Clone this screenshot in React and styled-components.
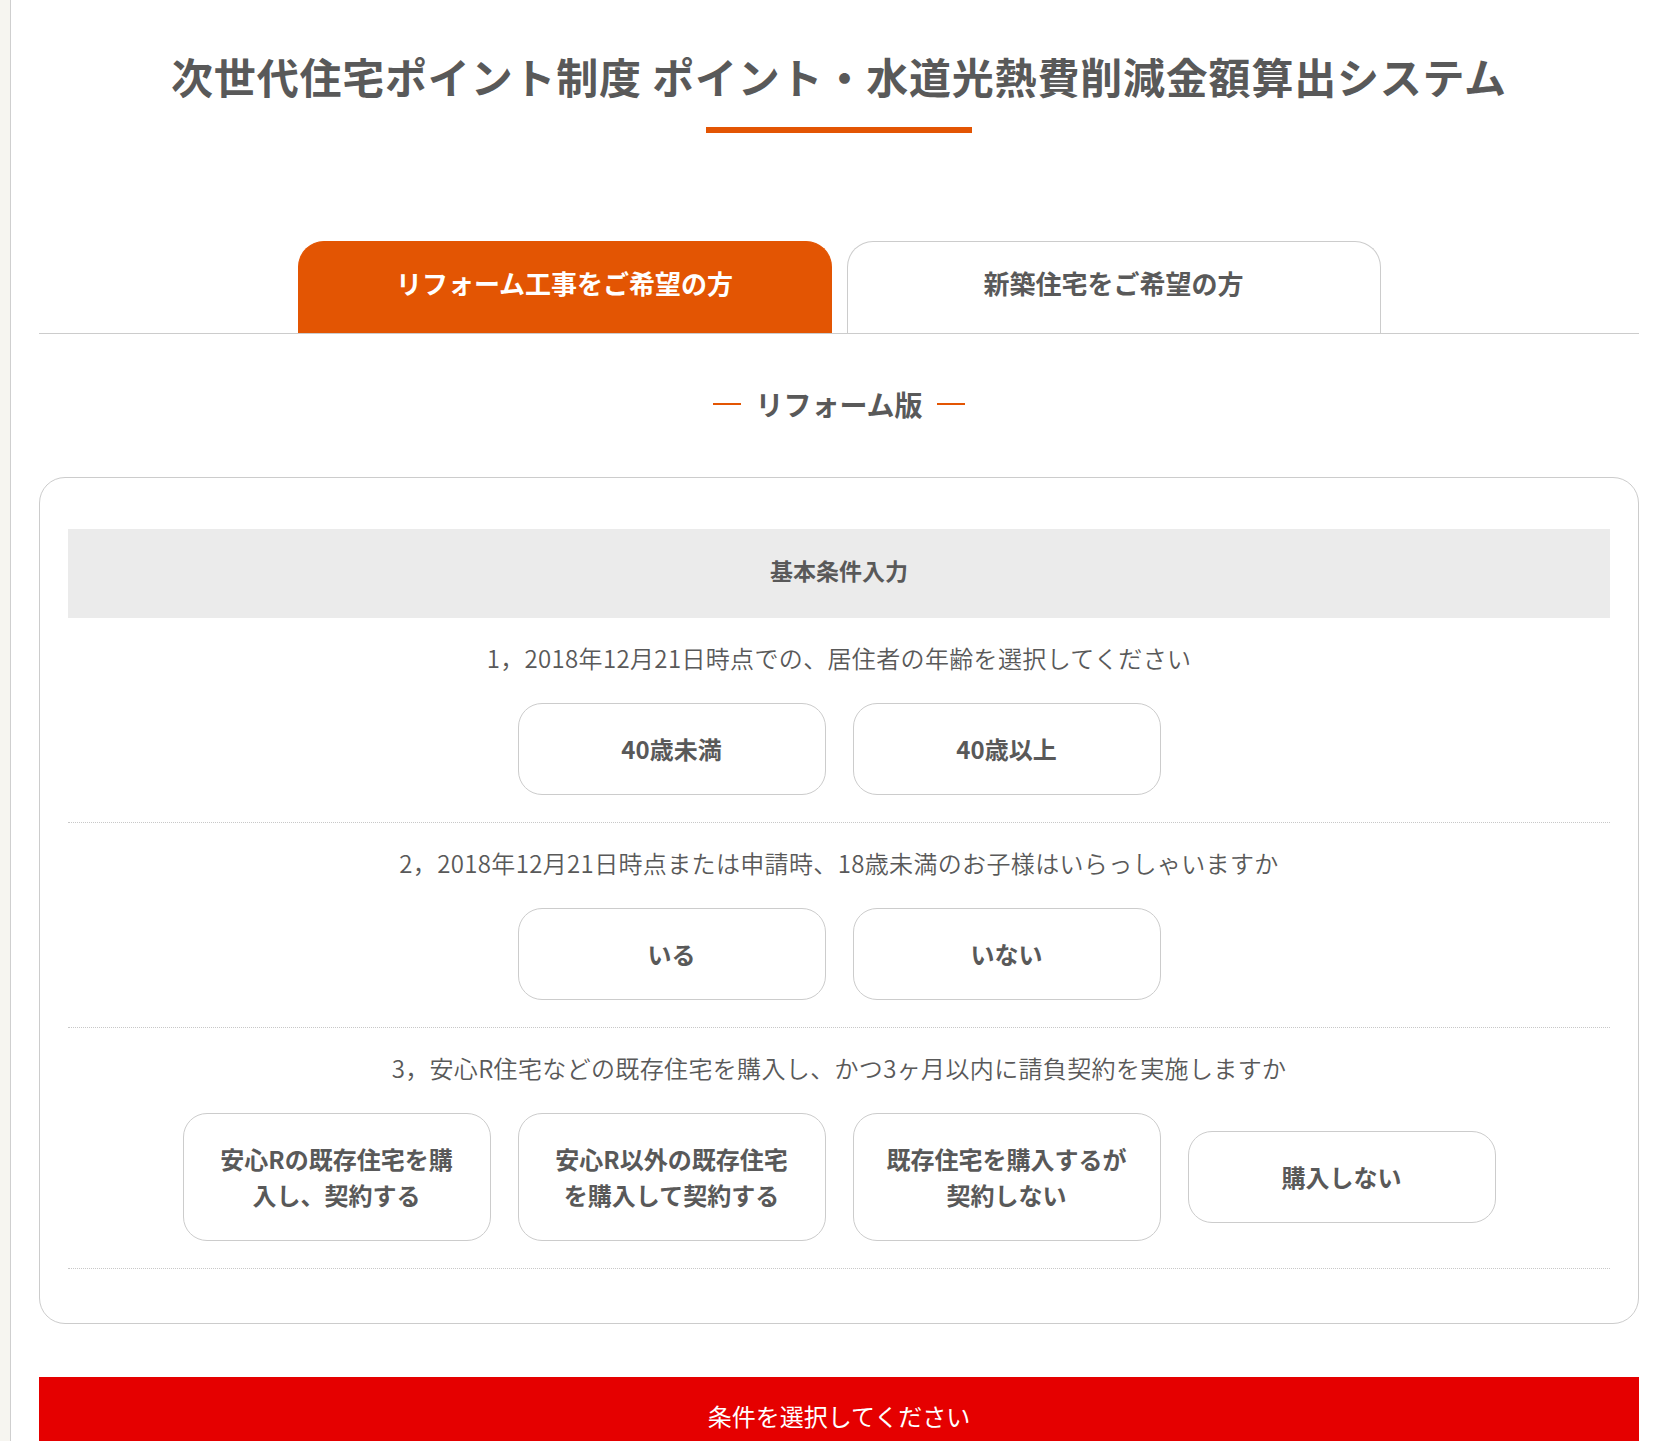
import React from "react";
import styled, { createGlobalStyle } from "styled-components";

const Global = createGlobalStyle`
  html, body { margin: 0; padding: 0; background: #fff; }
  body { font-family: "Noto Sans CJK JP", "Noto Sans", sans-serif; color: #595959; }
  * { box-sizing: border-box; }
`;

const Frame = styled.div`
  display: flex;
  height: 100vh;
  overflow: hidden;
`;

const SideStrip = styled.div`
  flex: 0 0 11px;
  background: #f6f5f0;
  border-right: 1px solid #cfcfcf;
`;

const Main = styled.main`
  flex: 1;
  padding: 0 17px 0 28px;
  display: flex;
  flex-direction: column;
`;

const Header = styled.header`
  display: flex;
  flex-direction: column;
  align-items: center;
  padding-top: 44px;
`;

const Title = styled.h1`
  margin: 0;
  font-size: 42px;
  line-height: 64px;
  font-weight: 700;
  color: #595959;
  letter-spacing: 0.8px;
`;

const TitleBar = styled.div`
  width: 266px;
  height: 6px;
  background: #e35503;
  margin-top: 19px;
`;

const Tabs = styled.nav`
  display: flex;
  justify-content: center;
  gap: 15px;
  margin-top: 108px;
  border-bottom: 1px solid #cccccc;
`;

const Tab = styled.div`
  width: 534px;
  height: 92px;
  display: flex;
  align-items: center;
  justify-content: center;
  border-radius: 26px 26px 0 0;
  font-size: 26px;
  font-weight: 700;
  color: ${(p) => (p.$active ? "#fff" : "#595959")};
  background: ${(p) => (p.$active ? "#e35503" : "#fff")};
  border: 1px solid ${(p) => (p.$active ? "#e35503" : "#cccccc")};
  border-bottom: none;
  padding-bottom: 10px;
`;

const Edition = styled.h2`
  margin: 52px 0 0;
  display: flex;
  align-items: center;
  justify-content: center;
  gap: 14px;
  font-size: 28px;
  line-height: 36px;
  font-weight: 700;
  color: #595959;
`;

const Dash = styled.span`
  width: 28px;
  height: 1.5px;
  background: #e35503;
`;

const Card = styled.section`
  margin-top: 55px;
  border: 1px solid #cccccc;
  border-radius: 26px;
  padding: 51px 28px 54px;
`;

const CardHead = styled.div`
  background: #ebebeb;
  height: 89px;
  display: flex;
  align-items: center;
  justify-content: center;
  font-size: 23px;
  font-weight: 700;
  color: #595959;
  padding-bottom: 8px;
`;

const Question = styled.div`
  padding: 22px 0 27px;
  border-bottom: 1px dotted #c8c8c8;
  display: flex;
  flex-direction: column;
  align-items: center;
`;

const QText = styled.p`
  margin: 0 0 27px;
  font-size: 24px;
  line-height: 36px;
  font-weight: 350;
  letter-spacing: 0.35px;
  color: #595959;
`;

const Choices = styled.div`
  display: flex;
  justify-content: center;
  align-items: center;
  gap: 27px;
`;

const Choice = styled.button`
  width: 308px;
  padding: 27px 30px 27px;
  border: 1px solid #cccccc;
  border-radius: 24px;
  background: #fff;
  font-family: inherit;
  font-size: 24px;
  line-height: 36px;
  font-weight: 700;
  color: #595959;
  cursor: pointer;
`;

const Submit = styled.div`
  margin-top: 53px;
  background: #e50000;
  color: #fff;
  text-align: center;
  font-size: 24px;
  line-height: 30px;
  font-weight: 400;
  padding: 24px 0 30px;
`;

const questions = [
  {
    text: "1，2018年12月21日時点での、居住者の年齢を選択してください",
    choices: ["40歳未満", "40歳以上"],
  },
  {
    text: "2，2018年12月21日時点または申請時、18歳未満のお子様はいらっしゃいますか",
    choices: ["いる", "いない"],
  },
  {
    text: "3，安心R住宅などの既存住宅を購入し、かつ3ヶ月以内に請負契約を実施しますか",
    choices: [
      "安心Rの既存住宅を購入し、契約する",
      "安心R以外の既存住宅を購入して契約する",
      "既存住宅を購入するが契約しない",
      "購入しない",
    ],
  },
];

export default function App() {
  return (
    <>
      <Global />
      <Frame>
        <SideStrip />
        <Main>
          <Header>
            <Title>次世代住宅ポイント制度 ポイント・水道光熱費削減金額算出システム</Title>
            <TitleBar />
          </Header>
          <Tabs>
            <Tab $active>リフォーム工事をご希望の方</Tab>
            <Tab>新築住宅をご希望の方</Tab>
          </Tabs>
          <Edition>
            <Dash />
            リフォーム版
            <Dash />
          </Edition>
          <Card>
            <CardHead>基本条件入力</CardHead>
            {questions.map((q) => (
              <Question key={q.text}>
                <QText>{q.text}</QText>
                <Choices>
                  {q.choices.map((c) => (
                    <Choice key={c}>{c}</Choice>
                  ))}
                </Choices>
              </Question>
            ))}
          </Card>
          <Submit>条件を選択してください</Submit>
        </Main>
      </Frame>
    </>
  );
}
